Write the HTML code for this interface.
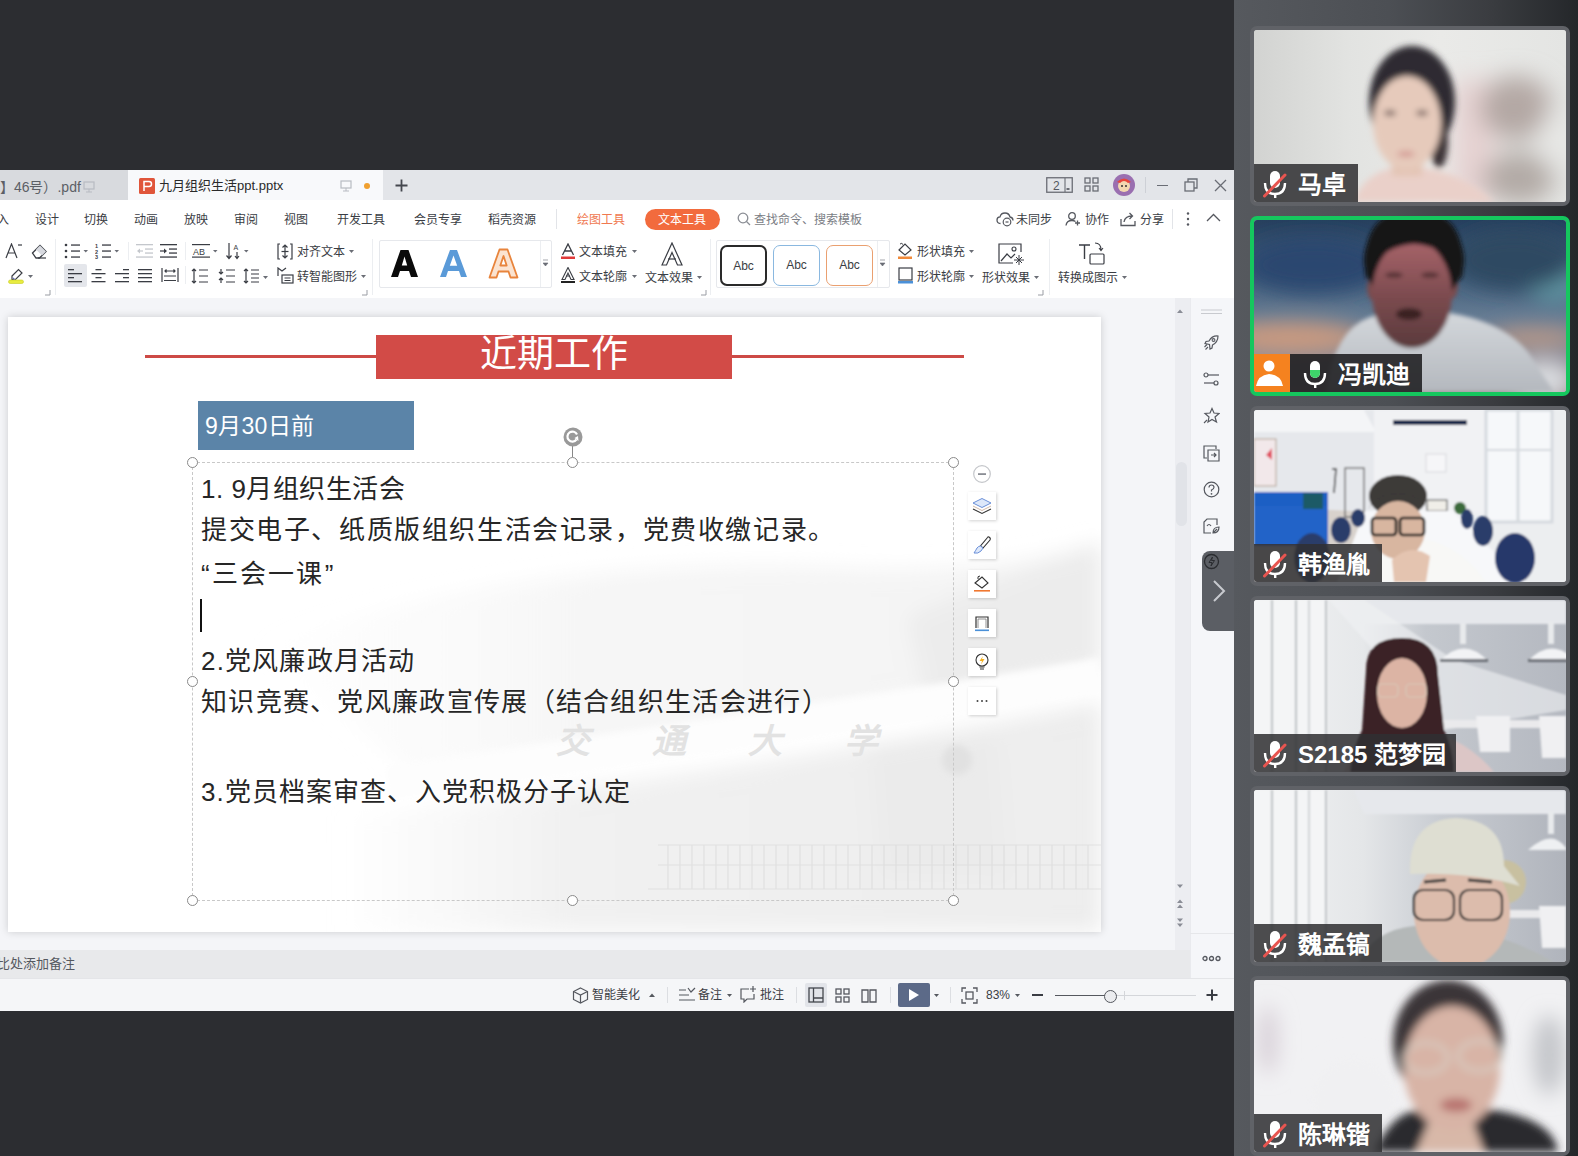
<!DOCTYPE html>
<html lang="zh-CN"><head><meta charset="utf-8">
<style>
*{margin:0;padding:0;box-sizing:border-box}
html,body{width:1578px;height:1156px;overflow:hidden;background:#2c2d31;font-family:"Liberation Sans",sans-serif;position:relative}
.a{position:absolute}
.t{position:absolute;white-space:nowrap;line-height:1}
.mn{position:absolute;top:214px;font-size:12px;line-height:1;color:#3a3d44;white-space:nowrap}
.rb{font-size:12px;color:#3a3d44}
.st{font-size:12px;color:#3a3d44}
.sl{font-size:26px;color:#262626}
.abc{position:absolute;top:245px;width:47px;height:41px;border-radius:7px;font-size:12px;color:#3a3d44;text-align:center;line-height:39px;background:#fff}
.hd{position:absolute;width:11px;height:11px;border-radius:50%;background:#fff;border:1.2px solid #8a8a8a}
.fb{position:absolute;left:968px;width:28px;height:28px;background:#fff;box-shadow:1px 1px 3px rgba(0,0,0,.18)}
.fb svg{position:absolute;left:0;top:0}
#panel{left:1234px;top:0;width:344px;height:1156px;background:linear-gradient(90deg,#56595e 0%,#4c4f54 45%,#3a3c40 75%,#24272a 100%)}
.tile{position:absolute;left:16px;width:320px;height:180px;border:4px solid #606267;border-radius:7px;overflow:hidden;background:#ccc}
.tile > svg{position:absolute;left:0;top:0}
.tile.spk{border-color:#15c75e}
.lbl{position:absolute;left:0;bottom:0;height:38px;background:rgba(48,48,50,.86);color:#fff;font-size:24px;font-weight:700}
.lbl .nm{position:absolute;top:9px;line-height:1;white-space:nowrap}
</style></head><body>
<!-- ===== WPS TOP ===== -->
<div class="a" style="left:0;top:170px;width:1234px;height:30px;background:#e3e5e9"></div>
<div class="a" style="left:0;top:170px;width:128px;height:30px;background:#d8dade"></div>
<div class="a" style="left:128px;top:170px;width:255px;height:30px;background:#f8f9fb"></div>
<span class="t" style="left:-4px;top:180px;font-size:14px;color:#5c5f66">.】46号）.pdf</span>
<svg class="a" style="left:83px;top:181px" width="12" height="12" viewBox="0 0 12 12"><rect x="1" y="1" width="10" height="7" fill="none" stroke="#b8bbc2" stroke-width="1.2"/><line x1="6" y1="8" x2="6" y2="11" stroke="#b8bbc2"/><line x1="3" y1="11" x2="9" y2="11" stroke="#b8bbc2"/></svg>
<svg class="a" style="left:139px;top:178px" width="16" height="16" viewBox="0 0 16 16"><rect width="16" height="16" rx="1.5" fill="#e0553a"/><path d="M5 13 V3.5 H10 Q12.5 3.5 12.5 6 Q12.5 8.5 10 8.5 H5" stroke="#fff" stroke-width="1.5" fill="none"/></svg>
<span class="t" style="left:159px;top:179px;font-size:13px;color:#2a2a2a">九月组织生活ppt.pptx</span>
<svg class="a" style="left:340px;top:180px" width="12" height="12" viewBox="0 0 12 12"><rect x="1" y="1" width="10" height="7" fill="none" stroke="#b8bbc2" stroke-width="1.2"/><line x1="6" y1="8" x2="6" y2="11" stroke="#b8bbc2"/><line x1="3" y1="11" x2="9" y2="11" stroke="#b8bbc2"/></svg>
<div class="a" style="left:364px;top:183px;width:6px;height:6px;border-radius:50%;background:#f0a030"></div>
<svg class="a" style="left:395px;top:179px" width="13" height="13" viewBox="0 0 13 13"><path d="M6.5 0.5V12.5M0.5 6.5H12.5" stroke="#44474e" stroke-width="1.8"/></svg>
<!-- title right icons -->
<svg class="a" style="left:1046px;top:177px" width="27" height="16" viewBox="0 0 27 16"><rect x="0.75" y="0.75" width="25.5" height="14.5" fill="none" stroke="#6a6d75" stroke-width="1.3"/><line x1="19" y1="1" x2="19" y2="15" stroke="#6a6d75" stroke-width="1.1"/><text x="7" y="13" font-size="12" fill="#55585f" font-family="Liberation Sans">2</text><rect x="20.5" y="11" width="3" height="2" fill="#6a6d75"/></svg>
<svg class="a" style="left:1084px;top:177px" width="15" height="15" viewBox="0 0 15 15"><g fill="none" stroke="#6a6d75" stroke-width="1.3"><rect x="1" y="1" width="5" height="5"/><rect x="9" y="1" width="5" height="5"/><rect x="1" y="9" width="5" height="5"/><rect x="9" y="9" width="5" height="5"/></g></svg>
<svg class="a" style="left:1113px;top:174px" width="22" height="22" viewBox="0 0 22 22"><circle cx="11" cy="11" r="11" fill="#9a6fb0"/><circle cx="11" cy="12" r="6" fill="#f3d8b0"/><path d="M4 8 Q11 1 18 8 L15 9 Q11 5 7 9Z" fill="#e8453a"/><circle cx="9" cy="12" r="1" fill="#333"/><circle cx="13" cy="12" r="1" fill="#333"/></svg>
<div class="a" style="left:1145px;top:177px;width:1px;height:16px;background:#cdd0d6"></div>
<div class="a" style="left:1157px;top:185px;width:11px;height:1.3px;background:#6a6d75"></div>
<svg class="a" style="left:1184px;top:178px" width="14" height="14" viewBox="0 0 14 14"><g fill="none" stroke="#6a6d75" stroke-width="1.3"><rect x="1" y="4" width="9" height="9"/><path d="M4 4V1H13V10H10"/></g></svg>
<svg class="a" style="left:1214px;top:179px" width="13" height="13" viewBox="0 0 13 13"><path d="M1 1L12 12M12 1L1 12" stroke="#6a6d75" stroke-width="1.3"/></svg>
<!-- menubar -->
<div class="a" style="left:0;top:200px;width:1234px;height:98px;background:#fff"></div>
<div class="mn" style="left:-3px">入</div>
<div class="mn" style="left:35px">设计</div>
<div class="mn" style="left:84px">切换</div>
<div class="mn" style="left:134px">动画</div>
<div class="mn" style="left:184px">放映</div>
<div class="mn" style="left:234px">审阅</div>
<div class="mn" style="left:284px">视图</div>
<div class="mn" style="left:337px">开发工具</div>
<div class="mn" style="left:414px">会员专享</div>
<div class="mn" style="left:488px">稻壳资源</div>
<div class="a" style="left:556px;top:209px;width:1px;height:20px;background:#e2e4e8"></div>
<div class="mn" style="left:577px;color:#f07850">绘图工具</div>
<div class="a" style="left:645px;top:209px;width:75px;height:21px;border-radius:11px;background:#f26b3d"></div>
<div class="mn" style="left:658px;color:#fff">文本工具</div>
<svg class="a" style="left:737px;top:212px" width="14" height="14" viewBox="0 0 14 14"><circle cx="6" cy="6" r="4.8" fill="none" stroke="#8a8d94" stroke-width="1.3"/><path d="M9.5 9.5L13 13" stroke="#8a8d94" stroke-width="1.3"/></svg>
<div class="mn" style="left:754px;color:#7a7d84">查找命令、搜索模板</div>
<svg class="a" style="left:996px;top:211px" width="18" height="16" viewBox="0 0 18 16"><path d="M4.5 12.5 Q1 12.5 1 9 Q1 6 4 5.8 Q5 2 9 2 Q13 2 14 6 Q17 6.5 17 9.5" fill="none" stroke="#55585f" stroke-width="1.3"/><circle cx="11" cy="11" r="3.8" fill="#fff" stroke="#55585f" stroke-width="1.2"/><path d="M9.5 11h3" stroke="#55585f" stroke-width="1.2"/></svg>
<div class="mn" style="left:1016px">未同步</div>
<svg class="a" style="left:1065px;top:211px" width="17" height="16" viewBox="0 0 17 16"><circle cx="7" cy="5" r="3.3" fill="none" stroke="#55585f" stroke-width="1.3"/><path d="M1 14.5 Q1.5 9.5 7 9.5 Q9 9.5 10.5 10.5" fill="none" stroke="#55585f" stroke-width="1.3"/><path d="M12.5 9.5v5M10 12h5" stroke="#55585f" stroke-width="1.3"/></svg>
<div class="mn" style="left:1085px">协作</div>
<svg class="a" style="left:1120px;top:211px" width="17" height="16" viewBox="0 0 17 16"><path d="M1 8V14.5H15V10" fill="none" stroke="#55585f" stroke-width="1.3"/><path d="M4 11 Q5 5 12 5 M9.5 2 L12.5 5 L9.5 8" fill="none" stroke="#55585f" stroke-width="1.3"/></svg>
<div class="mn" style="left:1140px">分享</div>
<div class="a" style="left:1172px;top:209px;width:1px;height:20px;background:#e2e4e8"></div>
<svg class="a" style="left:1186px;top:211px" width="4" height="16" viewBox="0 0 4 16"><circle cx="2" cy="2.5" r="1.2" fill="#55585f"/><circle cx="2" cy="8" r="1.2" fill="#55585f"/><circle cx="2" cy="13.5" r="1.2" fill="#55585f"/></svg>
<svg class="a" style="left:1206px;top:213px" width="15" height="9" viewBox="0 0 15 9"><path d="M1 8L7.5 1.5L14 8" fill="none" stroke="#55585f" stroke-width="1.3"/></svg>
<!-- ===== RIBBON ===== -->
<div class="a" style="left:55px;top:239px;width:1px;height:56px;background:#eceef1"></div>
<div class="a" style="left:128px;top:242px;width:1px;height:18px;background:#eceef1"></div>
<div class="a" style="left:185px;top:242px;width:1px;height:18px;background:#eceef1"></div>
<div class="a" style="left:185px;top:266px;width:1px;height:18px;background:#eceef1"></div>
<div class="a" style="left:372px;top:239px;width:1px;height:56px;background:#eceef1"></div>
<div class="a" style="left:710px;top:239px;width:1px;height:56px;background:#eceef1"></div>
<div class="a" style="left:1049px;top:239px;width:1px;height:56px;background:#eceef1"></div>
<!-- corner marks -->
<svg class="a" style="left:45px;top:290px" width="6" height="6"><path d="M5 0V5H0" fill="none" stroke="#9a9da4" stroke-width="1"/></svg>
<svg class="a" style="left:362px;top:290px" width="6" height="6"><path d="M5 0V5H0" fill="none" stroke="#9a9da4" stroke-width="1"/></svg>
<svg class="a" style="left:701px;top:290px" width="6" height="6"><path d="M5 0V5H0" fill="none" stroke="#9a9da4" stroke-width="1"/></svg>
<svg class="a" style="left:1038px;top:290px" width="6" height="6"><path d="M5 0V5H0" fill="none" stroke="#9a9da4" stroke-width="1"/></svg>
<!-- row1 -->
<svg class="a" style="left:5px;top:243px" width="18" height="16" viewBox="0 0 18 16"><path d="M1 15L6.5 1L12 15M3 10H10" fill="none" stroke="#3a3d44" stroke-width="1.2"/><path d="M13 2H17" stroke="#3a3d44" stroke-width="1.2"/></svg>
<svg class="a" style="left:31px;top:243px" width="17" height="16" viewBox="0 0 17 16"><path d="M1.5 10L9 2.5L15 8.5L8.5 15H5Z" fill="none" stroke="#3a3d44" stroke-width="1.3"/><path d="M9 2.5L15 8.5L11 12.5L5 6.5Z" fill="#d8dae0"/><path d="M7 15H15" stroke="#3a3d44" stroke-width="1.2"/></svg>
<svg class="a" style="left:64px;top:243px" width="25" height="16" viewBox="0 0 25 16"><g fill="#3a3d44"><circle cx="2" cy="2" r="1.3"/><circle cx="2" cy="8" r="1.3"/><circle cx="2" cy="14" r="1.3"/><rect x="7" y="1.4" width="9" height="1.3"/><rect x="7" y="7.4" width="9" height="1.3"/><rect x="7" y="13.4" width="9" height="1.3"/><path d="M19.5 7H24L21.75 9.5Z" fill="#6a6d75"/></g></svg>
<svg class="a" style="left:95px;top:243px" width="25" height="16" viewBox="0 0 25 16"><g fill="#3a3d44"><text x="0" y="5" font-size="5.5" font-family="Liberation Sans" font-weight="bold">1</text><text x="0" y="10.5" font-size="5.5" font-family="Liberation Sans" font-weight="bold">2</text><text x="0" y="16" font-size="5.5" font-family="Liberation Sans" font-weight="bold">3</text><rect x="7" y="1.4" width="9" height="1.3"/><rect x="7" y="7.4" width="9" height="1.3"/><rect x="7" y="13.4" width="9" height="1.3"/><path d="M19.5 7H24L21.75 9.5Z" fill="#6a6d75"/></g></svg>
<svg class="a" style="left:136px;top:243px" width="18" height="16" viewBox="0 0 18 16"><g fill="#c4c7cc"><rect x="0" y="1" width="17" height="1.3"/><rect x="9" y="5.4" width="8" height="1.3"/><rect x="9" y="9.4" width="8" height="1.3"/><rect x="0" y="13.4" width="17" height="1.3"/><path d="M1 8L4 5.5V10.5Z"/><rect x="3" y="7.4" width="4" height="1.2"/></g></svg>
<svg class="a" style="left:160px;top:243px" width="18" height="16" viewBox="0 0 18 16"><g fill="#3a3d44"><rect x="0" y="1" width="17" height="1.3"/><rect x="9" y="5.4" width="8" height="1.3"/><rect x="9" y="9.4" width="8" height="1.3"/><rect x="0" y="13.4" width="17" height="1.3"/><path d="M7 8L4 5.5V10.5Z"/><rect x="0" y="7.4" width="4" height="1.2"/></g></svg>
<svg class="a" style="left:192px;top:243px" width="27" height="16" viewBox="0 0 27 16"><g fill="#3a3d44"><rect x="0" y="1" width="18" height="1.2"/><rect x="0" y="13.5" width="18" height="1.2"/><text x="1" y="11.5" font-size="9" font-family="Liberation Sans">AB</text><path d="M21 7H25.5L23.25 9.5Z" fill="#6a6d75"/></g></svg>
<svg class="a" style="left:226px;top:242px" width="25" height="18" viewBox="0 0 25 18"><g fill="none" stroke="#3a3d44" stroke-width="1.2"><path d="M3 1V16M0.5 13.5L3 16.5L5.5 13.5"/><path d="M11 10V16M9 14L11 16.5L13 14"/></g><text x="7.5" y="8" font-size="7" font-family="Liberation Sans" fill="#3a3d44">A</text><path d="M18 8H22.5L20.25 10.5Z" fill="#6a6d75"/></svg>
<svg class="a" style="left:277px;top:243px" width="16" height="17" viewBox="0 0 16 17"><g fill="none" stroke="#3a3d44" stroke-width="1.2"><path d="M3 1H1V16H3M13 1H15V16H13"/><path d="M8 2V15M5.5 4.5L8 2L10.5 4.5M5.5 12.5L8 15L10.5 12.5"/><path d="M4.5 8.5H11.5"/></g></svg>
<span class="t rb" style="left:297px;top:246px">对齐文本</span>
<svg class="a" style="left:349px;top:250px" width="6" height="4"><path d="M0 0H5L2.5 3Z" fill="#6a6d75"/></svg>
<!-- row2 -->
<svg class="a" style="left:8px;top:267px" width="26" height="17" viewBox="0 0 26 17"><path d="M4 9L10.5 2.5L14 6L7.5 12.5H4Z" fill="none" stroke="#3a3d44" stroke-width="1.2"/><path d="M5 11L7 13" stroke="#6a6fb8" stroke-width="1.5"/><rect x="0.5" y="13" width="15" height="3.5" rx="1.7" fill="#e8ec40" stroke="#c8cc20" stroke-width=".6"/><path d="M20 8H25L22.5 11Z" fill="#6a6d75"/></svg>
<div class="a" style="left:64px;top:264px;width:23px;height:23px;background:#e4e6eb;border-radius:2px"></div>
<svg class="a" style="left:68px;top:269px" width="15" height="14" viewBox="0 0 15 14"><g fill="#3a3d44"><rect x="0" y="0" width="6" height="1.3"/><rect x="0" y="4" width="14" height="1.3"/><rect x="0" y="8" width="6" height="1.3"/><rect x="0" y="12" width="14" height="1.3"/></g></svg>
<svg class="a" style="left:91px;top:269px" width="15" height="14" viewBox="0 0 15 14"><g fill="#3a3d44"><rect x="4.5" y="0" width="6" height="1.3"/><rect x="0.5" y="4" width="14" height="1.3"/><rect x="4.5" y="8" width="6" height="1.3"/><rect x="0.5" y="12" width="14" height="1.3"/></g></svg>
<svg class="a" style="left:115px;top:269px" width="15" height="14" viewBox="0 0 15 14"><g fill="#3a3d44"><rect x="8" y="0" width="6" height="1.3"/><rect x="0" y="4" width="14" height="1.3"/><rect x="8" y="8" width="6" height="1.3"/><rect x="0" y="12" width="14" height="1.3"/></g></svg>
<svg class="a" style="left:138px;top:269px" width="15" height="14" viewBox="0 0 15 14"><g fill="#3a3d44"><rect x="0" y="0" width="14" height="1.3"/><rect x="0" y="4" width="14" height="1.3"/><rect x="0" y="8" width="14" height="1.3"/><rect x="0" y="12" width="14" height="1.3"/></g></svg>
<svg class="a" style="left:161px;top:268px" width="18" height="15" viewBox="0 0 18 15"><g fill="none" stroke="#3a3d44" stroke-width="1.2"><path d="M1 0V14M17 0V14"/><path d="M4 3H14M5.5 1.5L4 3L5.5 4.5M12.5 1.5L14 3L12.5 4.5"/><path d="M3 8H15M3 12.5H15"/></g></svg>
<svg class="a" style="left:191px;top:268px" width="18" height="16" viewBox="0 0 18 16"><g fill="none" stroke="#3a3d44" stroke-width="1.2"><path d="M3 1V15M1 3L3 1L5 3M1 13L3 15L5 13"/><path d="M8 2H17M8 8H17M8 14H17"/></g></svg>
<svg class="a" style="left:218px;top:268px" width="18" height="16" viewBox="0 0 18 16"><g fill="none" stroke="#3a3d44" stroke-width="1.2"><path d="M3 1V6M1 4L3 6L5 4M3 10V15M1 12L3 10L5 12"/><path d="M8 2H17M8 8H17M8 14H17"/></g></svg>
<svg class="a" style="left:243px;top:268px" width="27" height="16" viewBox="0 0 27 16"><g fill="none" stroke="#3a3d44" stroke-width="1.2"><path d="M3 1V15M1 3L3 1L5 3M1 13L3 15L5 13"/><path d="M8 2H16M8 6H16M8 10H16M8 14H16"/></g><path d="M20 8H25L22.5 11Z" fill="#6a6d75"/></svg>
<svg class="a" style="left:277px;top:267px" width="17" height="17" viewBox="0 0 17 17"><g fill="none" stroke="#3a3d44" stroke-width="1.2"><path d="M1 9V1L5 4L9 1"/><rect x="5" y="8" width="11" height="8"/><path d="M7.5 11H13.5M7.5 13.5H13.5"/></g></svg>
<span class="t rb" style="left:297px;top:271px">转智能图形</span>
<svg class="a" style="left:361px;top:275px" width="6" height="4"><path d="M0 0H5L2.5 3Z" fill="#6a6d75"/></svg>
<!-- big A gallery -->
<div class="a" style="left:379px;top:240px;width:173px;height:48px;border:1px solid #e6e8ec;border-radius:2px"></div>
<div class="a" style="left:540px;top:241px;width:1px;height:46px;background:#eceef1"></div>
<svg class="a" style="left:390px;top:249px" width="30" height="29" viewBox="0 0 30 29"><path fill-rule="evenodd" d="M1 28L10.5 1H18.5L28 28H21L19 22H10L8 28ZM11.8 16.5H17.2L14.5 7.5Z" fill="#0a0a0a"/></svg>
<svg class="a" style="left:439px;top:249px" width="30" height="29" viewBox="0 0 30 29"><path fill-rule="evenodd" d="M1 28L11 1H18L28 28H22L20 22H9L7 28ZM10.8 16.8H18.2L14.5 6.5Z" fill="#5a9ad8"/></svg>
<svg class="a" style="left:488px;top:248px" width="32" height="31" viewBox="0 0 32 31"><path fill-rule="evenodd" d="M1.5 29.5L11.5 1.5H19.5L29.5 29.5H22.5L20.5 23.5H10.5L8.5 29.5ZM12.3 17.5H18.7L15.5 8Z" fill="#fbe3d0" stroke="#e8843c" stroke-width="1.8" stroke-linejoin="round"/></svg>
<svg class="a" style="left:543px;top:259px" width="6" height="8"><path d="M0 1H5M0 4H5L2.5 7Z" fill="#6a6d75" stroke="#6a6d75" stroke-width=".6"/></svg>
<!-- text fill/outline -->
<svg class="a" style="left:561px;top:243px" width="15" height="17" viewBox="0 0 15 17"><path d="M1.5 12L7 1L12.5 12M3.8 8H10.2" fill="none" stroke="#3a3d44" stroke-width="1.3"/><rect x="0" y="13.5" width="14" height="2.5" fill="#e03a3a"/></svg>
<span class="t rb" style="left:579px;top:246px">文本填充</span>
<svg class="a" style="left:632px;top:250px" width="6" height="4"><path d="M0 0H5L2.5 3Z" fill="#6a6d75"/></svg>
<svg class="a" style="left:561px;top:267px" width="15" height="17" viewBox="0 0 15 17"><path d="M1 12.5L7 0.5L13 12.5H10L7 6L4 12.5Z" fill="none" stroke="#3a3d44" stroke-width="1.1"/><path d="M5 9H9" stroke="#3a3d44" stroke-width="1"/><rect x="0" y="14" width="14" height="2" fill="#222"/></svg>
<span class="t rb" style="left:579px;top:271px">文本轮廓</span>
<svg class="a" style="left:632px;top:275px" width="6" height="4"><path d="M0 0H5L2.5 3Z" fill="#6a6d75"/></svg>
<svg class="a" style="left:660px;top:242px" width="24" height="24" viewBox="0 0 24 24"><path d="M2 23L12 1L22 23H17.5L12 10.5L6.5 23Z" fill="#fff" stroke="#3a3d44" stroke-width="1.2"/><path d="M8 17H16" stroke="#3a3d44" stroke-width="1.2"/></svg>
<span class="t rb" style="left:645px;top:272px">文本效果</span>
<svg class="a" style="left:697px;top:276px" width="6" height="4"><path d="M0 0H5L2.5 3Z" fill="#6a6d75"/></svg>
<!-- shape style gallery -->
<div class="a" style="left:716px;top:240px;width:174px;height:48px;border:1px solid #e6e8ec;border-radius:2px"></div>
<div class="a" style="left:877px;top:241px;width:1px;height:46px;background:#eceef1"></div>
<div class="abc" style="left:720px;border:2px solid #2a2a2a">Abc</div>
<div class="abc" style="left:773px;border:1.4px solid #8ab8e0">Abc</div>
<div class="abc" style="left:826px;border:1.4px solid #eaa070">Abc</div>
<svg class="a" style="left:880px;top:259px" width="6" height="8"><path d="M0 1H5M0 4H5L2.5 7Z" fill="#6a6d75" stroke="#6a6d75" stroke-width=".6"/></svg>
<svg class="a" style="left:897px;top:242px" width="17" height="18" viewBox="0 0 17 18"><path d="M2 8L8 2L14 8L8 13Z" fill="none" stroke="#3a3d44" stroke-width="1.2"/><path d="M6 2.5Q5 0.5 3 2" fill="none" stroke="#3a3d44" stroke-width="1"/><rect x="1" y="14.5" width="14" height="2.5" fill="#f08a3a"/></svg>
<span class="t rb" style="left:917px;top:246px">形状填充</span>
<svg class="a" style="left:969px;top:250px" width="6" height="4"><path d="M0 0H5L2.5 3Z" fill="#6a6d75"/></svg>
<svg class="a" style="left:898px;top:267px" width="16" height="17" viewBox="0 0 16 17"><rect x="1" y="1" width="13" height="12" fill="none" stroke="#3a3d44" stroke-width="1.2"/><rect x="0" y="14" width="15" height="2.5" fill="#4a90d8"/></svg>
<span class="t rb" style="left:917px;top:271px">形状轮廓</span>
<svg class="a" style="left:969px;top:275px" width="6" height="4"><path d="M0 0H5L2.5 3Z" fill="#6a6d75"/></svg>
<svg class="a" style="left:998px;top:243px" width="26" height="23" viewBox="0 0 26 23"><path d="M15 20H1V1H23V9" fill="none" stroke="#3a3d44" stroke-width="1.2"/><path d="M3 18L9 11L13 15L17 11" fill="none" stroke="#3a3d44" stroke-width="1.2"/><circle cx="16" cy="6" r="2" fill="none" stroke="#3a3d44" stroke-width="1.1"/><path d="M21 12V22M16 17H26M18 14L24 20M24 14L18 20" stroke="#3a3d44" stroke-width="1"/></svg>
<span class="t rb" style="left:982px;top:272px">形状效果</span>
<svg class="a" style="left:1034px;top:276px" width="6" height="4"><path d="M0 0H5L2.5 3Z" fill="#6a6d75"/></svg>
<svg class="a" style="left:1078px;top:242px" width="28" height="24" viewBox="0 0 28 24"><path d="M1 3H12M6.5 3V17" stroke="#3a3d44" stroke-width="1.4" fill="none"/><rect x="12" y="12" width="14" height="10" rx="1" fill="none" stroke="#3a3d44" stroke-width="1.2"/><path d="M17 1Q23 1 23 8M21 6L23 8.5L25 6" fill="none" stroke="#3a3d44" stroke-width="1.1"/></svg>
<span class="t rb" style="left:1058px;top:272px">转换成图示</span>
<svg class="a" style="left:1122px;top:276px" width="6" height="4"><path d="M0 0H5L2.5 3Z" fill="#6a6d75"/></svg>
<!-- ===== CANVAS ===== -->
<div class="a" style="left:0;top:298px;width:1234px;height:652px;background:#f4f5f8"></div>
<div class="a" style="left:1175px;top:298px;width:15px;height:652px;background:#ecedf1"></div>
<div class="a" style="left:1190px;top:298px;width:44px;height:680px;background:#f5f6f9;border-left:1px solid #e9eaee"></div>
<svg class="a" style="left:1177px;top:309px" width="7" height="5"><path d="M0 4H6L3 0.5Z" fill="#8a8d96"/></svg>
<div class="a" style="left:1176px;top:462px;width:11px;height:64px;border-radius:6px;background:#e1e3e8"></div>
<svg class="a" style="left:1177px;top:884px" width="7" height="5"><path d="M0 0.5H6L3 4Z" fill="#8a8d96"/></svg>
<svg class="a" style="left:1177px;top:899px" width="7" height="10" viewBox="0 0 7 10"><path d="M0 4H6L3 0.5ZM0 9H6L3 5.5Z" fill="#8a8d96"/></svg>
<svg class="a" style="left:1177px;top:918px" width="7" height="10" viewBox="0 0 7 10"><path d="M0 0.5H6L3 4ZM0 5.5H6L3 9Z" fill="#8a8d96"/></svg>
<!-- slide -->
<div class="a" style="left:8px;top:317px;width:1093px;height:615px;background:#fff;box-shadow:0 0 8px rgba(0,0,0,.17);overflow:hidden">
  <svg class="a" style="left:0;top:0" width="1093" height="615" viewBox="0 0 1093 615">
    <defs>
      <filter id="sk" x="-20%" y="-20%" width="140%" height="140%"><feGaussianBlur stdDeviation="10"/></filter>
      <filter id="sk2" x="-20%" y="-20%" width="140%" height="140%"><feGaussianBlur stdDeviation="3"/></filter>
      <linearGradient id="gate" x1="0" x2="1" y1="0" y2="0"><stop offset="0" stop-color="#f2f2f2" stop-opacity="0"/><stop offset=".3" stop-color="#f1f1f1" stop-opacity="1"/><stop offset="1" stop-color="#ededed"/></linearGradient>
      <linearGradient id="tex" x1="0" x2="1" y1="0" y2="0"><stop offset="0" stop-color="#f7f7f7" stop-opacity="0"/><stop offset=".4" stop-color="#f6f6f6"/><stop offset="1" stop-color="#f3f3f3"/></linearGradient>
    </defs>
    <g filter="url(#sk)">
      <path d="M250 330 Q500 240 820 250 Q980 260 1093 225 V350 Q760 410 400 455Z" fill="url(#tex)"/>
      <path d="M330 500 Q740 455 1093 385 V615 H330Z" fill="url(#gate)"/>
      <path d="M900 300 Q1030 250 1093 225 V350 Q1000 370 920 390Z" fill="#ececec"/>
      <path d="M860 430 L990 420 L1000 560 L870 560Z" fill="#ebebeb"/>
    </g>
    <g filter="url(#sk2)">
      <path d="M380 466 Q760 412 1093 358" stroke="#fdfdfd" stroke-width="34" fill="none"/>
      <circle cx="949" cy="443" r="15" fill="#e1e1e1"/>
    </g>
    <g opacity=".55" stroke="#d4d4d4" stroke-width="1.2" fill="none">
      <path d="M650 528 H1093 M650 548 H1093 M640 572 H1093"/>
      <path d="M660 528V572M672 528V572M684 528V572M696 528V572M708 528V572M720 528V572M732 528V572M744 528V572M756 528V572M768 528V572M780 528V572M792 528V572M804 528V572M816 528V572M828 528V572M840 528V572M852 528V572M864 528V572M876 528V572M888 528V572M900 528V572M912 528V572M924 528V572M936 528V572M948 528V572M960 528V572M972 528V572M984 528V572M996 528V572M1008 528V572M1020 528V572M1032 528V572M1044 528V572M1056 528V572M1068 528V572M1080 528V572"/>
    </g>
    <text x="548" y="436" font-size="34" fill="#e2e2e2" font-family="Liberation Serif" font-weight="bold" font-style="italic" letter-spacing="62">交通大学</text>
  </svg>
</div>
<!-- title -->
<div class="a" style="left:145px;top:355px;width:231px;height:2.5px;background:#cd4a46"></div>
<div class="a" style="left:732px;top:355px;width:232px;height:2.5px;background:#cd4a46"></div>
<div class="a" style="left:376px;top:335px;width:356px;height:44px;background:#d24b47"></div>
<span class="t" style="left:480px;top:336px;font-size:37px;color:#fff">近期工作</span>
<div class="a" style="left:198px;top:401px;width:216px;height:49px;background:#5b84a8"></div>
<span class="t" style="left:205px;top:415px;font-size:23px;color:#fff;letter-spacing:.3px">9月30日前</span>
<!-- selection -->
<div class="a" style="left:192px;top:462px;width:762px;height:439px;border:1px dashed #c8c8c8"></div>
<div class="a" style="left:572px;top:446px;width:1px;height:11px;background:#888"></div>
<svg class="a" style="left:563px;top:427px" width="20" height="20" viewBox="0 0 20 20"><circle cx="10" cy="10" r="9.5" fill="#999"/><path d="M13.5 12.5 A5 5 0 1 1 14 7.5" fill="none" stroke="#fff" stroke-width="2.2"/><path d="M11.5 11 L15.5 14 L15 9Z" fill="#fff"/></svg>
<div class="hd" style="left:187px;top:457px"></div>
<div class="hd" style="left:567px;top:457px"></div>
<div class="hd" style="left:948px;top:457px"></div>
<div class="hd" style="left:187px;top:676px"></div>
<div class="hd" style="left:948px;top:676px"></div>
<div class="hd" style="left:187px;top:895px"></div>
<div class="hd" style="left:567px;top:895px"></div>
<div class="hd" style="left:948px;top:895px"></div>
<!-- text -->
<span class="t sl" style="left:201px;top:476px;letter-spacing:.5px">1. 9月组织生活会</span>
<span class="t sl" style="left:201px;top:517px;letter-spacing:1.6px">提交电子、纸质版组织生活会记录，党费收缴记录。</span>
<span class="t sl" style="left:201px;top:561px;letter-spacing:2.2px">“三会一课”</span>
<div class="a" style="left:200px;top:599px;width:1.5px;height:33px;background:#111"></div>
<span class="t sl" style="left:201px;top:648px;letter-spacing:1.2px">2.党风廉政月活动</span>
<span class="t sl" style="left:201px;top:689px;letter-spacing:1.3px">知识竞赛、党风廉政宣传展（结合组织生活会进行）</span>
<span class="t sl" style="left:201px;top:779px;letter-spacing:1.1px">3.党员档案审查、入党积极分子认定</span>
<!-- float toolbar -->
<svg class="a" style="left:972px;top:464px" width="20" height="20" viewBox="0 0 20 20"><circle cx="10" cy="10" r="8.3" fill="#fff" stroke="#c4c6ca" stroke-width="1.2"/><rect x="6" y="9.2" width="8" height="1.8" fill="#8a8d94"/></svg>
<div class="fb" style="top:492px"><svg width="28" height="28" viewBox="0 0 28 28"><path d="M5 11L14 6.5L23 11L14 15.5Z" fill="#dde8fa" stroke="#6a8fd8" stroke-width="1"/><path d="M5 14L14 18.5L23 14" fill="none" stroke="#d0b8a8" stroke-width="1"/><path d="M5 17L14 21.5L23 17" fill="none" stroke="#333" stroke-width="1.1"/></svg></div>
<div class="fb" style="top:531px"><svg width="28" height="28" viewBox="0 0 28 28"><path d="M21 6Q23 7 22 9L15 17L12.5 15L19.5 6.5Q20 5.5 21 6Z" fill="#fff" stroke="#333" stroke-width="1.1"/><path d="M12.5 15L15 17L13 20Q10 23 6 22Q8 19 9 17Q10.5 15 12.5 15Z" fill="#dde8fa" stroke="#6a8fd8" stroke-width="1"/></svg></div>
<div class="fb" style="top:570px"><svg width="28" height="28" viewBox="0 0 28 28"><path d="M7 13L14 7L20 13L14 18Z" fill="none" stroke="#333" stroke-width="1.1"/><path d="M10 9Q9 6 12 6" fill="none" stroke="#333" stroke-width="1"/><rect x="6" y="20" width="16" height="1.6" fill="#f07830"/></svg></div>
<div class="fb" style="top:609px"><svg width="28" height="28" viewBox="0 0 28 28"><path d="M8 19V8H20V19" fill="none" stroke="#333" stroke-width="1.2"/><path d="M10 19V10H18V19" fill="none" stroke="#777" stroke-width=".8"/><rect x="7" y="20.5" width="14" height="1.6" fill="#4a90d8"/></svg></div>
<div class="fb" style="top:648px"><svg width="28" height="28" viewBox="0 0 28 28"><circle cx="14" cy="12" r="6" fill="#fff" stroke="#333" stroke-width="1.1"/><path d="M15 8L11.5 13H14L13 16.5L16.5 11H14Z" fill="#f5b020"/><path d="M11.5 19H16.5M12 21H16" stroke="#333" stroke-width="1.1"/></svg></div>
<div class="fb" style="top:687px"><svg width="28" height="28" viewBox="0 0 28 28"><circle cx="9.5" cy="14" r="1" fill="#444"/><circle cx="14" cy="14" r="1" fill="#444"/><circle cx="18.5" cy="14" r="1" fill="#444"/></svg></div>
<!-- right sidebar icons -->
<svg class="a" style="left:1201px;top:309px" width="22" height="6"><path d="M0 1H21M0 4.5H21" stroke="#c8cacf" stroke-width="1"/></svg>
<svg class="a" style="left:1203px;top:334px" width="17" height="17" viewBox="0 0 17 17"><path d="M15 2Q9 1.5 6 7L3 7.5L2 9.5L6.5 10.5L7 15L9 14L9.5 11Q15 8 15 2Z" fill="none" stroke="#55585f" stroke-width="1.2"/><circle cx="10.5" cy="6" r="1.4" fill="none" stroke="#55585f" stroke-width="1.1"/><path d="M1.5 13L4 10.5M2.5 15.5L5 13" stroke="#55585f" stroke-width="1.1"/></svg>
<svg class="a" style="left:1203px;top:371px" width="17" height="17" viewBox="0 0 17 17"><g fill="none" stroke="#55585f" stroke-width="1.2"><circle cx="3" cy="4" r="2"/><path d="M5 4H16"/><circle cx="13" cy="12" r="2"/><path d="M1 12H11"/></g></svg>
<svg class="a" style="left:1203px;top:407px" width="17" height="17" viewBox="0 0 17 17"><path d="M9 1.5L11 6L16 6.5L12 10L13.5 15L9 12.5L5 15L6 10L2 6.5L7 6Z" fill="none" stroke="#55585f" stroke-width="1.2"/><path d="M1 16L4 13" stroke="#55585f" stroke-width="1.1"/></svg>
<svg class="a" style="left:1203px;top:445px" width="17" height="17" viewBox="0 0 17 17"><g fill="none" stroke="#55585f" stroke-width="1.2"><path d="M4 13H1V1H13V4"/><path d="M5 5H16V16H5Z"/><path d="M8 10H13M11 8L13 10L11 12"/></g></svg>
<svg class="a" style="left:1203px;top:481px" width="17" height="17" viewBox="0 0 17 17"><circle cx="8.5" cy="8.5" r="7.3" fill="none" stroke="#55585f" stroke-width="1.2"/><path d="M6 6.5Q6 4 8.5 4Q11 4 11 6.3Q11 8 8.5 9V10.5" fill="none" stroke="#55585f" stroke-width="1.2"/><circle cx="8.5" cy="12.8" r=".9" fill="#55585f"/></svg>
<svg class="a" style="left:1203px;top:518px" width="18" height="17" viewBox="0 0 18 17"><g fill="none" stroke="#55585f" stroke-width="1.2"><path d="M8 15H1V4L4 1H14V7"/><path d="M4 8Q6 5 8 8"/><path d="M10 15Q10 9 16 9Q16 15 10 15ZM10 15L14 11"/></g></svg>
<div class="a" style="left:1202px;top:551px;width:32px;height:80px;background:#5b5e64;border-radius:8px 0 0 8px"></div>
<svg class="a" style="left:1203px;top:553px" width="17" height="17" viewBox="0 0 17 17"><circle cx="8.5" cy="8.5" r="7" fill="none" stroke="#2a2c30" stroke-width="1.3"/><path d="M9.5 4L6 9.5H9L8 13L11.5 7.5H8.5Z" fill="none" stroke="#2a2c30" stroke-width="1"/></svg>
<svg class="a" style="left:1212px;top:579px" width="14" height="24" viewBox="0 0 14 24"><path d="M2 2L12 12L2 22" fill="none" stroke="#c8cacf" stroke-width="2"/></svg>
<div class="a" style="left:1238px;top:567px;width:1.5px;height:47px;background:#9a9da2"></div>
<div class="a" style="left:1242px;top:567px;width:1.5px;height:47px;background:#9a9da2"></div>
<div class="a" style="left:1190px;top:933px;width:44px;height:1px;background:#e6e7ea"></div>
<svg class="a" style="left:1202px;top:955px" width="19" height="7" viewBox="0 0 19 7"><g fill="none" stroke="#55585f" stroke-width="1.3"><circle cx="3" cy="3.5" r="2"/><circle cx="9.5" cy="3.5" r="2"/><circle cx="16" cy="3.5" r="2"/></g></svg>
<!-- notes & status -->
<div class="a" style="left:0;top:950px;width:1190px;height:28px;background:#e8e9eb"></div>
<span class="t" style="left:-3px;top:957px;font-size:13px;color:#55585f">比处添加备注</span>
<div class="a" style="left:0;top:978px;width:1234px;height:33px;background:#f5f6f8;border-top:1px solid #e4e5e8"></div>
<svg class="a" style="left:572px;top:987px" width="17" height="17" viewBox="0 0 17 17"><g fill="none" stroke="#55585f" stroke-width="1.2"><path d="M8.5 1L15.5 4.5V12.5L8.5 16L1.5 12.5V4.5Z"/><path d="M1.5 4.5L8.5 8L15.5 4.5M8.5 8V16"/></g></svg>
<span class="t st" style="left:592px;top:989px">智能美化</span>
<svg class="a" style="left:649px;top:993px" width="7" height="5"><path d="M0 4H6L3 0.5Z" fill="#55585f"/></svg>
<div class="a" style="left:667px;top:987px;width:1px;height:16px;background:#dcdee2"></div>
<svg class="a" style="left:678px;top:987px" width="18" height="16" viewBox="0 0 18 16"><g fill="none" stroke="#55585f" stroke-width="1.2"><path d="M1 3H8M1 8H11M1 13H17"/><path d="M10 1L13 5L17 1"/></g></svg>
<span class="t st" style="left:698px;top:989px">备注</span>
<svg class="a" style="left:727px;top:994px" width="6" height="4"><path d="M0 0H5L2.5 3Z" fill="#55585f"/></svg>
<svg class="a" style="left:740px;top:985px" width="17" height="18" viewBox="0 0 17 18"><g fill="none" stroke="#55585f" stroke-width="1.2"><path d="M9 4H1V14H4L4 17L7 14H14V9"/><path d="M13 1V7M10 4H16"/></g></svg>
<span class="t st" style="left:760px;top:989px">批注</span>
<div class="a" style="left:796px;top:987px;width:1px;height:16px;background:#dcdee2"></div>
<div class="a" style="left:805px;top:983px;width:22px;height:24px;background:#e2e4e9;border-radius:2px"></div>
<svg class="a" style="left:808px;top:987px" width="16" height="16" viewBox="0 0 16 16"><g fill="none" stroke="#44474e" stroke-width="1.3"><rect x="1" y="1" width="14" height="14"/><path d="M5.5 1V15M5.5 11H15"/></g></svg>
<svg class="a" style="left:835px;top:988px" width="15" height="15" viewBox="0 0 15 15"><g fill="none" stroke="#55585f" stroke-width="1.3"><rect x="1" y="1" width="5" height="5"/><rect x="9" y="1" width="5" height="5"/><rect x="1" y="9" width="5" height="5"/><rect x="9" y="9" width="5" height="5"/></g></svg>
<svg class="a" style="left:861px;top:988px" width="16" height="15" viewBox="0 0 16 15"><g fill="none" stroke="#55585f" stroke-width="1.3"><path d="M1 2H7V14H1ZM9 2H15V14H9Z"/></g></svg>
<div class="a" style="left:890px;top:987px;width:1px;height:16px;background:#dcdee2"></div>
<div class="a" style="left:898px;top:983px;width:32px;height:24px;background:#5c6a88;border-radius:2px"></div>
<svg class="a" style="left:908px;top:988px" width="12" height="14"><path d="M1 1L11 7L1 13Z" fill="#fff"/></svg>
<svg class="a" style="left:934px;top:994px" width="6" height="4"><path d="M0 0H5L2.5 3Z" fill="#55585f"/></svg>
<div class="a" style="left:950px;top:987px;width:1px;height:16px;background:#dcdee2"></div>
<svg class="a" style="left:961px;top:987px" width="17" height="17" viewBox="0 0 17 17"><g fill="none" stroke="#55585f" stroke-width="1.3"><path d="M1 5V1H5M12 1H16V5M16 12V16H12M5 16H1V12"/><rect x="5" y="5" width="7" height="7"/></g></svg>
<span class="t st" style="left:986px;top:989px">83%</span>
<svg class="a" style="left:1015px;top:994px" width="6" height="4"><path d="M0 0H5L2.5 3Z" fill="#55585f"/></svg>
<div class="a" style="left:1032px;top:994px;width:11px;height:2px;background:#3a3d44"></div>
<div class="a" style="left:1055px;top:995px;width:50px;height:1px;background:#55585f"></div>
<div class="a" style="left:1116px;top:995px;width:80px;height:1px;background:#d4d6da"></div>
<div class="a" style="left:1124px;top:991px;width:1px;height:9px;background:#d4d6da"></div>
<div class="a" style="left:1104px;top:990px;width:13px;height:13px;border-radius:50%;background:#ebecef;border:1.3px solid #55585f"></div>
<svg class="a" style="left:1206px;top:989px" width="12" height="12" viewBox="0 0 12 12"><path d="M6 0.5V11.5M0.5 6H11.5" stroke="#3a3d44" stroke-width="2"/></svg>
<div id="panel" class="a">
  <!-- tile 1 马卓 -->
  <div class="tile" style="top:26px">
    <svg width="312" height="172" viewBox="0 0 312 172">
      <defs>
        <filter id="b1" x="-20%" y="-20%" width="140%" height="140%"><feGaussianBlur stdDeviation="3"/></filter>
        <filter id="b8" x="-50%" y="-50%" width="200%" height="200%"><feGaussianBlur stdDeviation="12"/></filter>
        <linearGradient id="g1" x1="0" x2="1" y1="0" y2="0"><stop offset="0" stop-color="#d2d3d1"/><stop offset=".3" stop-color="#e2e3e1"/><stop offset=".6" stop-color="#eaeae8"/><stop offset="1" stop-color="#e4e5e3"/></linearGradient>
      </defs>
      <rect width="312" height="172" fill="url(#g1)"/>
      <g filter="url(#b8)">
        <rect x="200" y="50" width="40" height="122" fill="#e6d2d2"/>
        <ellipse cx="262" cy="78" rx="36" ry="32" fill="#b4a8a4"/>
        <ellipse cx="265" cy="148" rx="36" ry="26" fill="#b2aaa6"/>
        <ellipse cx="300" cy="110" rx="14" ry="30" fill="#e8e8e6"/>
      </g>
      <g filter="url(#b1)">
        <path d="M100 172 Q110 140 150 136 Q205 138 240 172Z" fill="#ead0c9"/>
        <ellipse cx="158" cy="72" rx="43" ry="56" fill="#2e2c32"/>
        <ellipse cx="185" cy="112" rx="9" ry="26" fill="#3a3236"/>
        <rect x="138" y="118" width="30" height="28" fill="#e3c4b4"/>
        <ellipse cx="153" cy="93" rx="34" ry="47" fill="#e6cabb"/>
        <ellipse cx="136" cy="83" rx="6" ry="2.5" fill="#5a4444"/>
        <ellipse cx="168" cy="83" rx="6" ry="2.5" fill="#5a4444"/>
        <ellipse cx="152" cy="124" rx="9" ry="3" fill="#d49a94"/>
      </g>
    </svg>
    <div class="lbl" style="width:104px"><svg class="mic" width="26" height="30" viewBox="0 0 26 30" style="position:absolute;left:8px;top:5px"><rect x="8" y="2" width="10" height="17" rx="5" fill="#fff"/><path d="M3 14 Q3 25 13 25 Q23 25 23 14" stroke="#fff" stroke-width="2.4" fill="none"/><rect x="12" y="25" width="2.4" height="4" fill="#fff"/><line x1="2.5" y1="27" x2="23" y2="6" stroke="#e85550" stroke-width="3" stroke-linecap="round"/></svg><span class="nm" style="left:44px">马卓</span></div>
  </div>
  <!-- tile 2 冯凯迪 -->
  <div class="tile spk" style="top:216px">
    <svg width="312" height="172" viewBox="0 0 312 172">
      <defs>
        <linearGradient id="g2" x1="0" x2="0" y1="0" y2="1"><stop offset="0" stop-color="#26405e"/><stop offset=".35" stop-color="#45617e"/><stop offset=".55" stop-color="#637a92"/><stop offset=".8" stop-color="#8c8c98"/><stop offset="1" stop-color="#9a8e90"/></linearGradient>
        <linearGradient id="f2" x1="0" x2="0" y1="0" y2="1"><stop offset="0" stop-color="#a8646a"/><stop offset=".55" stop-color="#7a4a4e"/><stop offset="1" stop-color="#5a3a3c"/></linearGradient>
        <linearGradient id="s2" x1="0" x2="0" y1="0" y2="1"><stop offset="0" stop-color="#d4d8dc"/><stop offset="1" stop-color="#b4b8be"/></linearGradient>
        <filter id="b2" x="-50%" y="-50%" width="200%" height="200%"><feGaussianBlur stdDeviation="10"/></filter>
        <filter id="b2s" x="-20%" y="-20%" width="140%" height="140%"><feGaussianBlur stdDeviation="2"/></filter>
      </defs>
      <rect width="312" height="172" fill="url(#g2)"/>
      <g filter="url(#b2)">
        <ellipse cx="35" cy="118" rx="75" ry="16" fill="#c99a80"/>
        <ellipse cx="300" cy="62" rx="28" ry="22" fill="#5f93a0"/>
        <ellipse cx="280" cy="118" rx="45" ry="10" fill="#b89888"/>
        <ellipse cx="60" cy="45" rx="70" ry="28" fill="#2a4670"/>
        <ellipse cx="260" cy="40" rx="60" ry="30" fill="#2d4a62"/>
        <ellipse cx="290" cy="160" rx="30" ry="20" fill="#d8dade"/>
      </g>
      <g filter="url(#b2s)">
        <path d="M72 172 Q80 110 116 97 Q158 86 206 95 Q252 105 274 132 L300 172Z" fill="url(#s2)"/>
        <path d="M134 100 Q157 122 182 100 L176 92 H140Z" fill="#6a4444"/>
        <ellipse cx="120" cy="68" rx="7" ry="13" fill="#7a4c4e"/>
        <ellipse cx="197" cy="66" rx="7" ry="13" fill="#7a4c4e"/>
        <ellipse cx="160" cy="40" rx="50" ry="46" fill="#141316"/><ellipse cx="158" cy="74" rx="40" ry="54" fill="url(#f2)"/>
        <path d="M112 60 Q104 -10 160 -10 Q216 -10 208 60 Q196 26 160 24 Q124 26 112 60Z" fill="#141316"/>
        <ellipse cx="155" cy="94" rx="13" ry="6" fill="#3a2224"/>
        <ellipse cx="140" cy="55" rx="9" ry="3" fill="#5a3438"/>
        <ellipse cx="176" cy="55" rx="9" ry="3" fill="#5a3438"/>
      </g>
    </svg>
    <div class="a" style="left:0;bottom:0;width:36px;height:38px;background:#f5821f"><svg width="36" height="38" viewBox="0 0 36 38" style="position:absolute;left:0;top:0"><circle cx="15" cy="12" r="5.5" fill="#fff"/><path d="M2 32 Q4 21 15 20 Q27 21 29 32Z" fill="#fff"/></svg></div>
    <div class="lbl" style="left:36px;width:132px;background:rgba(30,30,32,.88)"><svg width="26" height="30" viewBox="0 0 26 30" style="position:absolute;left:12px;top:5px"><rect x="8" y="2" width="10" height="17" rx="5" fill="#fff"/><path d="M8 11 h10 v3 a5 5 0 0 1 -10 0Z" fill="#3ed46a"/><path d="M3 14 Q3 25 13 25 Q23 25 23 14" stroke="#fff" stroke-width="2.4" fill="none"/><rect x="12" y="25" width="2.4" height="4" fill="#fff"/></svg><span class="nm" style="left:48px">冯凯迪</span></div>
  </div>
  <!-- tile 3 韩渔胤 -->
  <div class="tile" style="top:406px">
    <svg width="312" height="172" viewBox="0 0 312 172">
      <defs>
        <filter id="b3" x="-20%" y="-20%" width="140%" height="140%"><feGaussianBlur stdDeviation="1"/></filter>
      </defs>
      <rect width="312" height="172" fill="#eef0f2"/>
      <g filter="url(#b3)">
        <path d="M0 0 H120 V102 L0 96Z" fill="#e6e8ec"/>
        <path d="M0 0 H110 L122 22 H0Z" fill="#f4f5f7"/>
        <path d="M0 96 L120 102 V172 H0Z" fill="#d8d2cc"/>
        <path d="M120 0 H232 V103 H120Z" fill="#f1f2f4"/>
        <path d="M232 0 H312 V172 H232 L232 103Z" fill="#eceef0"/>
        <rect x="232" y="0" width="66" height="112" fill="#f6f8fa" stroke="#d6dadf" stroke-width="3"/>
        <line x1="264" y1="0" x2="264" y2="112" stroke="#d6dadf" stroke-width="3"/>
        <line x1="232" y1="40" x2="298" y2="40" stroke="#d6dadf" stroke-width="2"/>
        <rect x="139" y="10" width="74" height="5" fill="#1d2a48"/>
        <rect x="0" y="29" width="22" height="47" fill="#f2e8ea" stroke="#b0a090"/>
        <path d="M12 45 L18 38 L18 50Z" fill="#e05060"/>
        <rect x="172" y="44" width="20" height="18" fill="#f6f6f8" stroke="#d0d0d4" stroke-width=".8"/>
        <path d="M78 59 L82 59 L80 83" stroke="#222" stroke-width="1.5" fill="none"/>
        <rect x="91" y="58" width="19" height="49" fill="none" stroke="#555" stroke-width="1.2"/>
        <path d="M0 82 H74 V100 H0Z" fill="#1e5fc4"/>
        <path d="M0 96 H74 V136 H0Z" fill="#2063c8"/>
        <rect x="49" y="83" width="20" height="16" fill="#1a5a66"/>
        <rect x="173" y="90" width="20" height="11" fill="#f0eee8" stroke="#444" stroke-width="1"/>
        <ellipse cx="206" cy="98" rx="6" ry="6" fill="#3a6a3a"/>
        <path d="M111 101 H198 L271 172 H83Z" fill="#f7f8fa"/>
        <ellipse cx="87" cy="120" rx="10" ry="13" fill="#2a3c6a"/>
        <ellipse cx="104" cy="108" rx="7" ry="9" fill="#2a3c6a"/>
        <ellipse cx="58" cy="148" rx="18" ry="25" fill="#2a3c6a"/>
        <ellipse cx="213" cy="109" rx="6" ry="10" fill="#2a3c6a"/>
        <ellipse cx="229" cy="121" rx="10" ry="15" fill="#2a3c6a"/>
        <ellipse cx="261" cy="148" rx="20" ry="25" fill="#28386a"/>
        <path d="M122 172 Q124 132 150 128 Q200 126 232 172Z" fill="#f8f8f6"/>
        <ellipse cx="144" cy="86" rx="29" ry="21" fill="#3c3a38"/>
        <ellipse cx="144" cy="120" rx="27" ry="29" fill="#d8b6a0"/>
        <path d="M115 100 Q118 84 144 84 Q170 84 173 100 L172 96 Q144 70 116 96Z" fill="#3c3a38"/>
        <rect x="118" y="108" width="24" height="17" fill="none" stroke="#1e1e1e" stroke-width="2.6" rx="3"/>
        <rect x="146" y="108" width="24" height="17" fill="none" stroke="#1e1e1e" stroke-width="2.6" rx="3"/>
        <path d="M138 150 Q156 132 176 146 L172 172 H140Z" fill="#e4c4b0"/>
      </g>
    </svg>
    <div class="lbl" style="width:128px"><svg width="26" height="30" viewBox="0 0 26 30" style="position:absolute;left:8px;top:5px"><rect x="8" y="2" width="10" height="17" rx="5" fill="#fff"/><path d="M3 14 Q3 25 13 25 Q23 25 23 14" stroke="#fff" stroke-width="2.4" fill="none"/><rect x="12" y="25" width="2.4" height="4" fill="#fff"/><line x1="2.5" y1="27" x2="23" y2="6" stroke="#e85550" stroke-width="3" stroke-linecap="round"/></svg><span class="nm" style="left:44px">韩渔胤</span></div>
  </div>
  <!-- tile 4 范梦园 -->
  <div class="tile" style="top:596px">
    <svg width="312" height="172" viewBox="0 0 312 172">
      <defs>
        <linearGradient id="g4" x1="0" x2="1" y1="0" y2="0"><stop offset="0" stop-color="#f2f3f4"/><stop offset=".35" stop-color="#e6e8ea"/><stop offset=".55" stop-color="#c4c8ce"/><stop offset="1" stop-color="#b4b8c0"/></linearGradient>
        <filter id="b4" x="-20%" y="-20%" width="140%" height="140%"><feGaussianBlur stdDeviation="1.3"/></filter>
      </defs>
      <rect width="312" height="172" fill="url(#g4)"/>
      <g filter="url(#b4)">
        <path d="M100 0 H312 V24 H110Z" fill="#e6e8ec"/>
        <path d="M75 0 L190 130 L312 110 L312 95 L200 60 L110 0Z" fill="#f0f1f3" opacity=".6"/>
        <rect x="0" y="0" width="74" height="172" fill="#f4f5f6"/>
        <line x1="18" y1="0" x2="18" y2="172" stroke="#a8acb0" stroke-width="1.5"/>
        <line x1="42" y1="0" x2="42" y2="172" stroke="#a8acb0" stroke-width="1.5"/>
        <line x1="55" y1="0" x2="55" y2="172" stroke="#b8bcc0" stroke-width="1.2"/>
        <line x1="72" y1="0" x2="72" y2="172" stroke="#a8acb0" stroke-width="1.5"/>
        <path d="M186 61 Q210 36 234 61Z" fill="#f2f3f5"/><rect x="186" y="59" width="48" height="3" fill="#6a6e76"/><rect x="206" y="24" width="6" height="20" fill="#e8eaec"/>
        <path d="M274 61 Q298 36 322 61Z" fill="#f2f3f5"/><rect x="274" y="59" width="48" height="3" fill="#6a6e76"/><rect x="294" y="22" width="6" height="22" fill="#e8eaec"/>
        <rect x="180" y="120" width="132" height="8" fill="#eaeaec"/>
        <path d="M222 116 H256 V152 H226Z" fill="#f0f0f2"/>
        <path d="M285 116 H312 V158 H288Z" fill="#f0f0f2"/>
        <path d="M90 172 Q105 130 148 128 Q205 130 240 172Z" fill="#dcc6c6"/>
        <path d="M112 70 Q112 38 148 38 Q184 38 184 75 L190 130 Q200 150 200 172 H96 Q98 150 108 130Z" fill="#3a2426"/>
        <ellipse cx="148" cy="93" rx="25" ry="35" fill="#dcb4a4"/>
        <rect x="124" y="84" width="20" height="13" rx="4" fill="none" stroke="#d8c8b8" stroke-width="1.2"/>
        <rect x="152" y="84" width="20" height="13" rx="4" fill="none" stroke="#d8c8b8" stroke-width="1.2"/>
      </g>
    </svg>
    <div class="lbl" style="width:202px"><svg width="26" height="30" viewBox="0 0 26 30" style="position:absolute;left:8px;top:5px"><rect x="8" y="2" width="10" height="17" rx="5" fill="#fff"/><path d="M3 14 Q3 25 13 25 Q23 25 23 14" stroke="#fff" stroke-width="2.4" fill="none"/><rect x="12" y="25" width="2.4" height="4" fill="#fff"/><line x1="2.5" y1="27" x2="23" y2="6" stroke="#e85550" stroke-width="3" stroke-linecap="round"/></svg><span class="nm" style="left:44px">S2185 范梦园</span></div>
  </div>
  <!-- tile 5 魏孟镐 -->
  <div class="tile" style="top:786px">
    <svg width="312" height="172" viewBox="0 0 312 172">
      <defs>
        <linearGradient id="g5" x1="0" x2="1" y1="0" y2="0"><stop offset="0" stop-color="#f2f3f4"/><stop offset=".35" stop-color="#e4e6e8"/><stop offset=".6" stop-color="#c8ccd2"/><stop offset="1" stop-color="#b0b4bc"/></linearGradient>
        <filter id="b5" x="-20%" y="-20%" width="140%" height="140%"><feGaussianBlur stdDeviation="1.3"/></filter>
      </defs>
      <rect width="312" height="172" fill="url(#g5)"/>
      <g filter="url(#b5)">
        <path d="M100 0 H312 V24 H110Z" fill="#e6e8ec"/>
        <rect x="0" y="0" width="74" height="172" fill="#f4f5f6"/>
        <line x1="18" y1="0" x2="18" y2="172" stroke="#a8acb0" stroke-width="1.5"/>
        <line x1="42" y1="0" x2="42" y2="172" stroke="#a8acb0" stroke-width="1.5"/>
        <line x1="55" y1="0" x2="55" y2="172" stroke="#b8bcc0" stroke-width="1.2"/>
        <line x1="72" y1="0" x2="72" y2="172" stroke="#a8acb0" stroke-width="1.5"/>
        <path d="M274 60 Q298 38 312 58 V60Z" fill="#eef0f2"/><rect x="294" y="22" width="6" height="22" fill="#e8eaec"/>
        <rect x="255" y="120" width="57" height="8" fill="#eaeaec"/>
        <path d="M285 116 H312 V158 H288Z" fill="#f0f0f2"/>
        <path d="M105 172 Q120 140 160 136 Q240 136 300 172Z" fill="#b4b8b8"/>
        <ellipse cx="250" cy="92" rx="22" ry="22" fill="#c8c0a0"/>
        <ellipse cx="208" cy="122" rx="48" ry="56" fill="#dcbcac"/>
        <path d="M156 84 Q154 30 202 28 Q250 30 250 76 L266 96 Q220 82 156 84Z" fill="#deded2"/>
        <rect x="160" y="100" width="40" height="30" rx="9" fill="none" stroke="#2e2e2e" stroke-width="2.2"/>
        <rect x="206" y="100" width="42" height="30" rx="9" fill="none" stroke="#2e2e2e" stroke-width="2.2"/>
        <path d="M170 92 L192 90 M214 90 L238 92" stroke="#3a3a3a" stroke-width="3"/>
      </g>
    </svg>
    <div class="lbl" style="width:128px"><svg width="26" height="30" viewBox="0 0 26 30" style="position:absolute;left:8px;top:5px"><rect x="8" y="2" width="10" height="17" rx="5" fill="#fff"/><path d="M3 14 Q3 25 13 25 Q23 25 23 14" stroke="#fff" stroke-width="2.4" fill="none"/><rect x="12" y="25" width="2.4" height="4" fill="#fff"/><line x1="2.5" y1="27" x2="23" y2="6" stroke="#e85550" stroke-width="3" stroke-linecap="round"/></svg><span class="nm" style="left:44px">魏孟镐</span></div>
  </div>
  <!-- tile 6 陈琳锴 -->
  <div class="tile" style="top:976px">
    <svg width="312" height="172" viewBox="0 0 312 172">
      <defs>
        <filter id="b6" x="-20%" y="-20%" width="140%" height="140%"><feGaussianBlur stdDeviation="4"/></filter>
        <filter id="b6b" x="-50%" y="-50%" width="200%" height="200%"><feGaussianBlur stdDeviation="10"/></filter>
      </defs>
      <rect width="312" height="172" fill="#f1f1f3"/>
      <g filter="url(#b6b)">
        <ellipse cx="14" cy="60" rx="10" ry="35" fill="#d8d0d8"/>
        <ellipse cx="295" cy="75" rx="16" ry="40" fill="#c4c6ca"/>
        <ellipse cx="100" cy="120" rx="40" ry="40" fill="#f0f0f2"/>
      </g>
      <g filter="url(#b6)">
        <path d="M120 172 Q140 128 170 130 L240 130 Q300 140 304 172Z" fill="#2a2a2e"/>
        <path d="M162 172 L178 135 L216 135 L230 172Z" fill="#d8b8a8"/>
        <ellipse cx="194" cy="62" rx="55" ry="62" fill="#3a3438"/>
        <ellipse cx="198" cy="88" rx="48" ry="62" fill="#d8b4a6"/>
        <ellipse cx="172" cy="78" rx="22" ry="15" fill="none" stroke="#d8d8d0" stroke-width="3" opacity=".8"/>
        <ellipse cx="226" cy="76" rx="22" ry="15" fill="none" stroke="#d8d8d0" stroke-width="3" opacity=".8"/>
        <ellipse cx="202" cy="125" rx="16" ry="7" fill="#b8726e"/>
      </g>
    </svg>
    <div class="lbl" style="width:128px"><svg width="26" height="30" viewBox="0 0 26 30" style="position:absolute;left:8px;top:5px"><rect x="8" y="2" width="10" height="17" rx="5" fill="#fff"/><path d="M3 14 Q3 25 13 25 Q23 25 23 14" stroke="#fff" stroke-width="2.4" fill="none"/><rect x="12" y="25" width="2.4" height="4" fill="#fff"/><line x1="2.5" y1="27" x2="23" y2="6" stroke="#e85550" stroke-width="3" stroke-linecap="round"/></svg><span class="nm" style="left:44px">陈琳锴</span></div>
  </div>
</div>

</body></html>
